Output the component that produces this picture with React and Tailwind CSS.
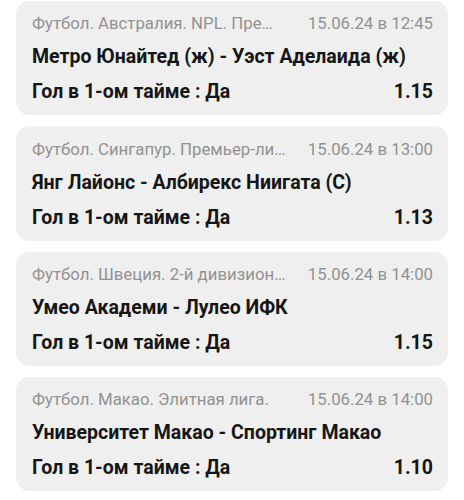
const BETS = [
  {
    league: "Футбол. Австралия. NPL. Пре…",
    date: "15.06.24 в 12:45",
    match: "Метро Юнайтед (ж) - Уэст Аделаида (ж)",
    outcome: "Гол в 1-ом тайме : Да",
    odd: "1.15",
  },
  {
    league: "Футбол. Сингапур. Премьер-ли…",
    date: "15.06.24 в 13:00",
    match: "Янг Лайонс - Албирекс Ниигата (С)",
    outcome: "Гол в 1-ом тайме : Да",
    odd: "1.13",
  },
  {
    league: "Футбол. Швеция. 2-й дивизион…",
    date: "15.06.24 в 14:00",
    match: "Умео Академи - Лулео ИФК",
    outcome: "Гол в 1-ом тайме : Да",
    odd: "1.15",
  },
  {
    league: "Футбол. Макао. Элитная лига.",
    date: "15.06.24 в 14:00",
    match: "Университет Макао - Спортинг Макао",
    outcome: "Гол в 1-ом тайме : Да",
    odd: "1.10",
  },
]

function BetCard({ bet }) {
  return (
    <div className="h-[114.33px] rounded-[14px] bg-[#efefef] pl-4 pr-[15px] pt-[11px]">
      <div className="flex items-center gap-3 h-[24px] text-[16.8px] text-[#929292]">
        <span className="flex-1 min-w-0 overflow-hidden whitespace-nowrap">{bet.league}</span>
        <span className="shrink-0">{bet.date}</span>
      </div>
      <div className="mt-[9px] h-[24px] flex items-center text-[19.5px] font-bold text-[#161616] whitespace-nowrap">
        {bet.match}
      </div>
      <div className="mt-[11px] h-[24px] flex items-center justify-between text-[19.5px] font-bold text-[#161616]">
        <span>{bet.outcome}</span>
        <span>{bet.odd}</span>
      </div>
    </div>
  )
}

export default function App() {
  return (
    <div className="w-[464px] h-[500px] overflow-hidden bg-white px-4 pt-[1px] flex flex-col gap-[11px]"
      style={{ fontFamily: "Roboto, 'Noto Sans', sans-serif" }}>
      {BETS.map((b, i) => <BetCard key={i} bet={b} />)}
    </div>
  )
}
